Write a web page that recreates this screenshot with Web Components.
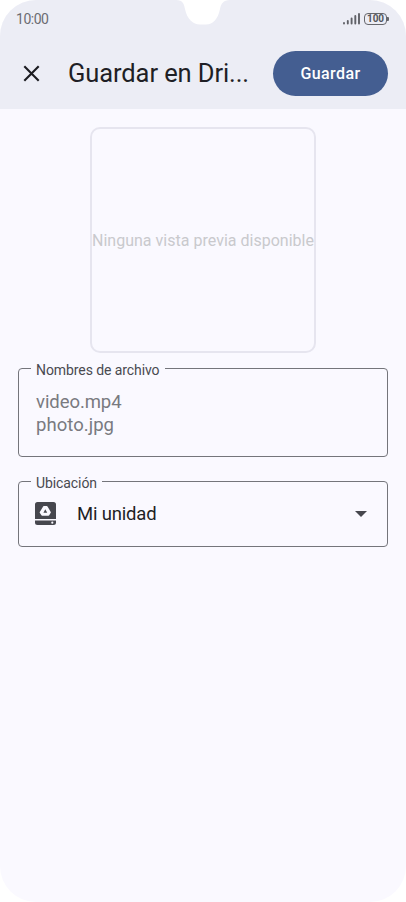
<!DOCTYPE html>
<html lang="es">
<head>
<meta charset="utf-8">
<title>Guardar en Drive</title>
<style>
html, body { margin: 0; background: #fff; }
body { font-family: Roboto, "Noto Sans", sans-serif; color: #1f1f25; }
</style>
</head>
<body>
<phone-screen>
  <status-bar slot="top" time="10:00" battery="100"></status-bar>
  <app-bar slot="top"><fit-text slot="title" width="181">Guardar en Dri...</fit-text><pill-button slot="action"><fit-text width="60">Guardar</fit-text></pill-button></app-bar>
  <preview-card><fit-text width="222">Ninguna vista previa disponible</fit-text></preview-card>
  <outlined-field style="--h:89px;--gap:15px"><fit-text slot="label" width="123.5">Nombres de archivo</fit-text><file-names><fit-text width="85.5">video.mp4</fit-text><fit-text width="78">photo.jpg</fit-text></file-names></outlined-field>
  <outlined-field style="--h:66px;--gap:24px"><fit-text slot="label" width="61">Ubicación</fit-text><location-picker><fit-text width="79.5">Mi unidad</fit-text></location-picker></outlined-field>
</phone-screen>
<script>
function define(name, html, setup) {
  const tpl = document.createElement('template');
  tpl.innerHTML = html;
  customElements.define(name, class extends HTMLElement {
    connectedCallback() {
      if (this.shadowRoot) return;
      this.attachShadow({ mode: 'open' }).append(tpl.content.cloneNode(true));
      if (setup) setup(this, this.shadowRoot);
    }
  });
}

define('phone-screen', `<style>
:host { display: block; position: relative; width: 406px; height: 902px; overflow: hidden; border-radius: 36px; background: #faf9ff; }
header { height: 109px; background: #ecedf5; }
main { display: flex; flex-direction: column; align-items: center; padding: 18px 18px 0; }
.notch { position: absolute; left: 176px; top: 0; display: block; }
</style>
<header><slot name="top"></slot></header>
<svg class="notch" width="54" height="25" viewBox="0 0 54 25"><path d="M0 0C7 0 8 4 9 9C11 19 17 24.5 24 24.5H30C37 24.5 42 19 44 9C45 4 47 0 54 0Z" fill="#fff"/></svg>
<main><slot></slot></main>`);

define('status-bar', `<style>
:host { display: flex; height: 38px; box-sizing: border-box; padding: 0 17px 0 16px; align-items: center; justify-content: space-between; color: #6b6c72; font-size: 14px; }
.icons { display: flex; gap: 4px; align-items: center; }
svg { display: block; }
.battery { display: flex; align-items: center; }
.cell { box-sizing: border-box; width: 23px; height: 12px; border: 1.5px solid #66676c; border-radius: 4px; font: 700 10px/10.5px Roboto, sans-serif; text-align: center; color: #55565b; }
.tip { width: 2px; height: 4px; background: #66676c; border-radius: 0 1px 1px 0; }
</style>
<fit-text width="32.5"></fit-text>
<div class="icons"><svg width="17" height="12" viewBox="0 0 17 12" stroke="#606167" stroke-width="1.9" stroke-linecap="round"><path d="M1 10V10.5M4.8 8V10.5M8.6 5.5V10.5M12.3 3V10.5M16 1V10.5"/></svg>
<div class="battery"><div class="cell"></div><div class="tip"></div></div></div>`, (el, root) => {
  root.querySelector('fit-text').textContent = el.getAttribute('time');
  root.querySelector('.cell').textContent = el.getAttribute('battery');
});

define('app-bar', `<style>
:host { display: flex; height: 71px; box-sizing: border-box; align-items: center; padding: 0 18px 0 23px; }
svg { display: block; margin-right: 28px; }
.title { font-size: 25.5px; line-height: 34px; flex: 1; padding-bottom: 2px; }
</style>
<svg width="17" height="17" viewBox="0 0 17 17" stroke="#1b1b20" stroke-width="2.1"><path d="M1.3 1.3L15.7 15.7M15.7 1.3L1.3 15.7"/></svg>
<div class="title"><slot name="title"></slot></div><slot name="action"></slot>`);

define('pill-button', `<style>
:host { display: flex; width: 115px; height: 45px; border-radius: 23px; background: #445e91; color: #fff; align-items: center; justify-content: center; font-size: 16px; font-weight: 500; }
</style><slot></slot>`);

define('preview-card', `<style>
:host { display: flex; width: 226px; height: 226px; box-sizing: border-box; border: 2px solid #e6e5ef; border-radius: 10px; align-items: center; justify-content: center; font-size: 16px; color: #c9c9cd; white-space: nowrap; }
</style><slot></slot>`);

define('outlined-field', `<style>
:host { display: block; width: 370px; margin-top: var(--gap); }
fieldset { box-sizing: border-box; margin: -8px 0 0; min-width: 0; height: calc(var(--h) + 8px); border: 1px solid #74757b; border-radius: 4px; padding: 0; }
legend { margin-left: 12px; padding: 0 5px; height: 16px; line-height: 20px; font-size: 14px; color: #494a50; }
</style><fieldset><legend><slot name="label"></slot></legend><slot></slot></fieldset>`);

define('file-names', `<style>
:host { display: flex; flex-direction: column; padding: 15px 17px 0; font-size: 18.5px; line-height: 23px; color: #797a80; }
</style><slot></slot>`);

define('location-picker', `<style>
:host { display: flex; height: 49px; align-items: center; padding-left: 16px; padding-right: 20px; font-size: 18.5px; }
svg { display: block; }
.name { flex: 1; margin-left: 21px; padding-top: 1px; }
</style>
<svg width="21" height="23" viewBox="0 0 21 23"><path d="M2.5 0H18.5Q21 0 21 2.5V17H0V2.5Q0 0 2.5 0ZM0 18.5H21V20.5Q21 23 18.5 23H2.5Q0 23 0 20.5Z" fill="#46474e"/><path d="M9 4.8H11.8L15 10.4L13.5 12.8H7.1L5.5 10.4Z" fill="#faf9ff" stroke="#faf9ff" stroke-width="1.7" stroke-linejoin="round"/><path d="M10.3 7.3L12.2 10.7H8.4Z" fill="#46474e"/><circle cx="17.3" cy="20.7" r="1.1" fill="#faf9ff"/></svg>
<div class="name"><slot></slot></div>
<svg width="12" height="6" viewBox="0 0 12 6"><path d="M0 0H12L6 6Z" fill="#46474e"/></svg>`);

/* Spreads its letters so that the line takes the given width. */
define('fit-text', `<style>
:host { display: inline-block; white-space: nowrap; }
span { display: inline-block; }
</style><span><slot></slot></span>`, (el, root) => {
  const span = root.querySelector('span');
  requestAnimationFrame(() => {
    const w = span.getBoundingClientRect().width;
    const n = el.textContent.length;
    if (w && n) el.style.letterSpacing = (Number(el.getAttribute('width')) - w) / n + 'px';
  });
});
</script>
</body>
</html>
